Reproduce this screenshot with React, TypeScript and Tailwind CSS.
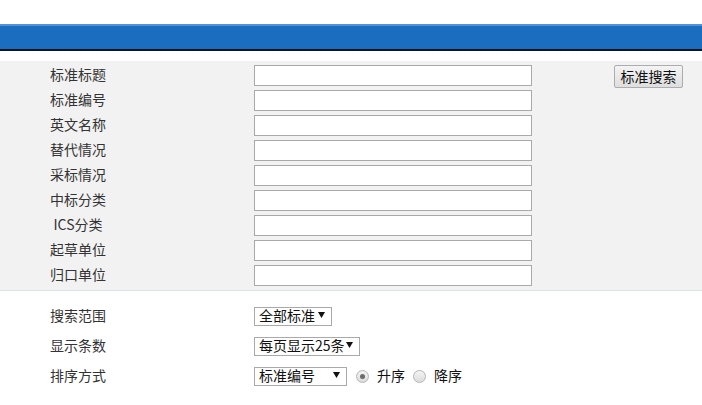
import React from 'react';

const fields = ['标准标题', '标准编号', '英文名称', '替代情况', '采标情况', '中标分类', 'ICS分类', '起草单位', '归口单位'];

const FakeSelect: React.FC<{ label: string; width: string }> = ({ label, width }) => (
  <div
    className={`flex h-[19px] items-center justify-between border border-[#a9a9a9] bg-white pl-[4px] pr-[6px] text-[14px] leading-none text-[#111] ${width}`}
  >
    <span className="-mt-[2px]">{label}</span>
    <svg width="7" height="6" viewBox="0 0 7 6" className="-mt-[2px]">
      <path d="M0 0H7L3.5 6Z" fill="#111" />
    </svg>
  </div>
);

const Radio: React.FC<{ checked?: boolean }> = ({ checked }) => (
  <span className="flex h-[13px] w-[13px] items-center justify-center rounded-full border border-[#b5b5b5] bg-gradient-to-b from-[#f4f4f4] to-[#dcdcdc]">
    {checked && <span className="h-[5px] w-[5px] rounded-full bg-[#6b6b6b]" />}
  </span>
);

const App: React.FC = () => {
  return (
    <div className="h-[405px] w-full overflow-hidden bg-white text-[14px] text-[#333] [font-family:'Noto_Sans_CJK_SC','Microsoft_YaHei',sans-serif]">
      <div className="h-[24px]" />
      <div className="h-[27px] border-t-2 border-b-2 border-t-[#4f92d6] border-b-[#0b1624] bg-[#1b6dbf]" />
      <div className="h-[10px]" />

      <div className="flex border-b border-[#d8e2ec] bg-[#f2f2f2] pt-[4px]">
        <div className="flex flex-col">
          {fields.map((name) => (
            <div key={name} className="flex h-[25px] items-start">
              <span className="-mt-[2px] flex h-[21px] w-[156px] items-center justify-center leading-none">{name}</span>
              <span className="ml-[98px] h-[21px] w-[278px] border border-[#a9a9a9] bg-white" />
            </div>
          ))}
        </div>
        <div className="ml-[82px]">
          <button
            type="button"
            className="flex h-[23px] w-[69px] items-center justify-center rounded-[2px] border border-[#acacac] bg-gradient-to-b from-[#f4f4f4] to-[#dedede] pb-[2px] text-[14px] leading-none text-[#111]"
          >
            标准搜索
          </button>
        </div>
      </div>

      <div className="flex flex-col pt-[10px]">
        <div className="flex h-[30px] items-center">
          <span className="-mt-[2px] w-[156px] text-center leading-none">搜索范围</span>
          <div className="ml-[98px]">
            <FakeSelect label="全部标准" width="w-[78px]" />
          </div>
        </div>
        <div className="flex h-[30px] items-center">
          <span className="-mt-[2px] w-[156px] text-center leading-none">显示条数</span>
          <div className="ml-[98px]">
            <FakeSelect label="每页显示25条" width="w-[106px]" />
          </div>
        </div>
        <div className="flex h-[30px] items-center">
          <span className="-mt-[2px] w-[156px] text-center leading-none">排序方式</span>
          <div className="ml-[98px] flex items-center">
            <FakeSelect label="标准编号" width="w-[93px]" />
            <span className="ml-[9px]">
              <Radio checked />
            </span>
            <span className="-mt-[2px] ml-[8px] leading-none text-[#111]">升序</span>
            <span className="ml-[8px]">
              <Radio />
            </span>
            <span className="-mt-[2px] ml-[8px] leading-none text-[#111]">降序</span>
          </div>
        </div>
      </div>
    </div>
  );
};

export default App;
